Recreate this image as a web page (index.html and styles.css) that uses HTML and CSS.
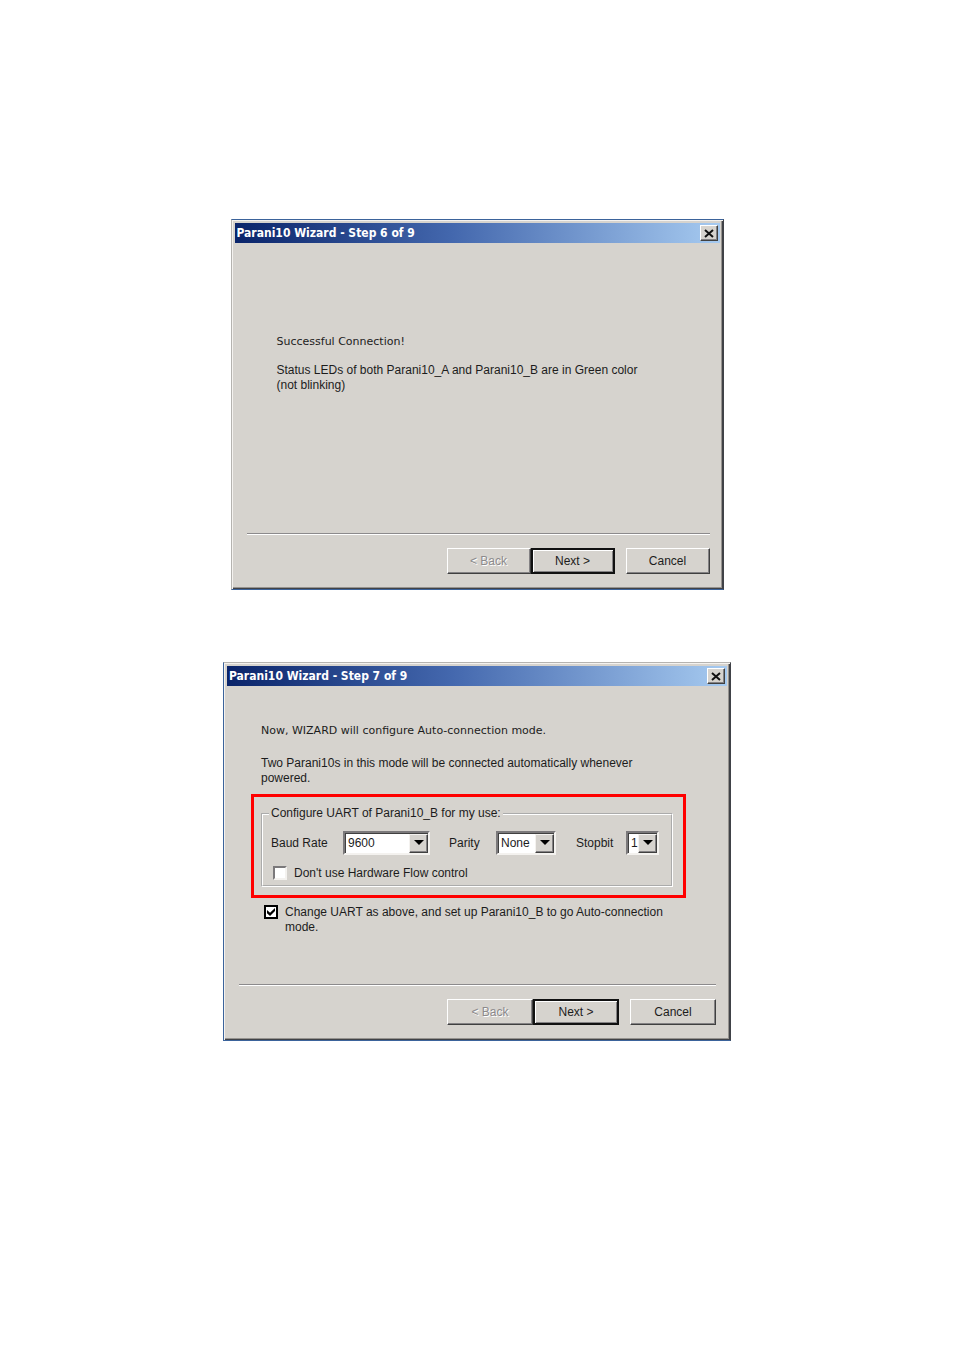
FILE: index.html
```html
<!DOCTYPE html>
<html lang="en">
<head>
    <meta charset="UTF-8">
    <meta name="viewport" content="width=device-width, initial-scale=1.0">
    <title>Parani10 Wizard</title>
    <link rel="stylesheet" href="styles.css">
</head>
<body>
    <main class="page">
        <section class="dialog dialog-small">
            <header class="titlebar">
                <h2>Parani10 Wizard - Step 6 of 9</h2>
                <button type="button" class="close" aria-label="Close">
                    <svg width="10" height="9" viewBox="0 0 10 9"><path d="M1 1l8 7M9 1L1 8" stroke="#111" stroke-width="2"/></svg>
                </button>
            </header>
            <div class="dialog-body status">
                <p class="lead">Successful Connection!</p>
                <p>Status LEDs of both Parani10_A and Parani10_B are in Green color<br>(not blinking)</p>
            </div>
            <footer class="actions">
                <button type="button" class="btn" disabled>&lt; Back</button>
                <button type="button" class="btn btn-default">Next &gt;</button>
                <button type="button" class="btn btn-cancel">Cancel</button>
            </footer>
        </section>

        <form class="dialog dialog-large">
            <header class="titlebar">
                <h2>Parani10 Wizard - Step 7 of 9</h2>
                <button type="button" class="close" aria-label="Close">
                    <svg width="10" height="9" viewBox="0 0 10 9"><path d="M1 1l8 7M9 1L1 8" stroke="#111" stroke-width="2"/></svg>
                </button>
            </header>
            <div class="dialog-body config">
                <div class="intro">
                    <p class="lead">Now, WIZARD will configure Auto-connection mode.</p>
                    <p>Two Parani10s in this mode will be connected automatically whenever<br>powered.</p>
                </div>

                <div class="highlight">
                    <fieldset>
                        <legend>Configure UART of Parani10_B for my use:</legend>
                        <div class="uart">
                            <label for="baud">Baud Rate</label>
                            <span class="combo combo-baud">
                                <select id="baud"><option>9600</option></select>
                            </span>
                            <label for="parity">Parity</label>
                            <span class="combo combo-parity">
                                <select id="parity"><option>None</option></select>
                            </span>
                            <label for="stopbit">Stopbit</label>
                            <span class="combo combo-stop">
                                <select id="stopbit"><option>1</option></select>
                            </span>
                        </div>
                        <div class="check">
                            <input type="checkbox" id="flow">
                            <label for="flow">Don't use Hardware Flow control</label>
                        </div>
                    </fieldset>
                </div>

                <div class="check check-apply">
                    <input type="checkbox" id="apply" checked>
                    <label for="apply">Change UART as above, and set up Parani10_B to go Auto-connection<br>mode.</label>
                </div>
            </div>
            <footer class="actions">
                <button type="button" class="btn" disabled>&lt; Back</button>
                <button type="button" class="btn btn-default">Next &gt;</button>
                <button type="button" class="btn btn-cancel">Cancel</button>
            </footer>
        </form>
    </main>
</body>
</html>
```
FILE: styles.css
```css
* {
    margin: 0;
    padding: 0;
    box-sizing: border-box;
}

body {
    font-family: "Liberation Sans", Arial, sans-serif;
    font-size: 12px;
    line-height: 15px;
    color: #1c1c1c;
    background: #ffffff;
}

button,
select {
    font: inherit;
    color: inherit;
}

.page {
    display: flex;
    flex-direction: column;
    align-items: center;
    gap: 72px;
    padding: 219px 0;
}

/* Dialog frame */
.dialog {
    width: 100%;
    padding: 3px;
    background: #d6d3ce;
    border: 1px solid #3b639b;
    border-right-color: #404247;
    box-shadow: inset 1px 1px #f4f2ef, inset -1px -1px #404247, inset -2px -2px #96938f;
}

.dialog-small {
    max-width: 493px;
    border-left-color: #b5b3b0;
}

.dialog-large {
    max-width: 508px;
    border-top-color: #b5b3b0;
}

.titlebar {
    display: flex;
    align-items: center;
    justify-content: space-between;
    height: 20px;
    padding: 0 2px;
    background: linear-gradient(to right, #0a246a, #4468ae 45%, #a6caf0);
}

.titlebar h2 {
    font-family: "DejaVu Sans Condensed", "DejaVu Sans", sans-serif;
    font-size: 12px;
    font-weight: bold;
    font-stretch: condensed;
    color: #ffffff;
}

.close {
    display: flex;
    align-items: center;
    justify-content: center;
    width: 18px;
    height: 16px;
    background: #d6d3ce;
    border: 1px solid;
    border-color: #ffffff #404040 #404040 #ffffff;
    box-shadow: inset -1px -1px #848284;
}

.dialog-small .dialog-body {
    min-height: 290px;
}

.dialog-large .dialog-body {
    min-height: 298px;
}

.status {
    padding: 91px 42px 0;
}

.config {
    padding: 37px 41px 0 24px;
}

.intro {
    padding-left: 10px;
}

.lead {
    font-family: "DejaVu Sans", sans-serif;
    font-size: 11px;
    margin-bottom: 14px;
}

.config .lead {
    margin-bottom: 18px;
}

/* UART settings */
.highlight {
    margin-top: 8px;
    padding: 9px 10px 8px 7px;
    border: 3px solid #ff0000;
}

fieldset {
    padding: 10px 8px 4px;
    border: 2px groove #ffffff;
}

legend {
    padding: 0 2px;
    margin-left: -2px;
}

.uart {
    display: grid;
    grid-template-columns: 72px 106px 47px 80px 50px 33px;
    align-items: center;
    margin-bottom: 11px;
}

.combo {
    position: relative;
    height: 24px;
    background: #ffffff;
    border: 2px solid;
    border-color: #7b797b #f4f2ef #f4f2ef #7b797b;
    box-shadow: inset 1px 1px #404040;
}

.combo-baud {
    width: 87px;
}

.combo-parity {
    width: 60px;
}

.combo-stop {
    width: 33px;
}

.combo select {
    appearance: none;
    display: block;
    width: 100%;
    height: 20px;
    padding: 0 0 0 3px;
    background: transparent;
    border: 0;
}

.combo::before {
    content: "";
    position: absolute;
    top: 1px;
    right: 0;
    bottom: 0;
    width: 17px;
    background: #d6d3ce;
    border: 1px solid;
    border-color: #f4f2ef #404040 #404040 #f4f2ef;
    box-shadow: inset -1px -1px #848284;
    pointer-events: none;
}

.combo::after {
    content: "";
    position: absolute;
    top: 7px;
    right: 4px;
    border: 5px solid transparent;
    border-top-color: #000000;
    border-bottom: 0;
    pointer-events: none;
}

.check {
    display: flex;
    align-items: flex-start;
    gap: 7px;
    padding-left: 2px;
}

.check input {
    appearance: none;
    flex: none;
    width: 14px;
    height: 14px;
    background: #ffffff;
    border: 2px solid;
    border-color: #7b797b #f4f2ef #f4f2ef #7b797b;
}

.check input:checked {
    border-color: #000000;
}

.check input:checked::before {
    content: "";
    display: block;
    width: 8px;
    height: 8px;
    margin: 1px;
    background: #000000;
    clip-path: polygon(0 25%, 38% 60%, 100% 0, 100% 38%, 38% 100%, 0 65%);
}

.check-apply {
    margin-top: 7px;
    padding-left: 13px;
}

/* Wizard buttons */
.actions {
    display: flex;
    justify-content: flex-end;
    margin: 0 11px 0 12px;
    padding: 14px 0 12px;
    border-top: 1px solid #8c8a8c;
    box-shadow: inset 0 1px #ffffff;
}

.dialog-small .actions {
    margin-right: 10px;
}

.btn {
    width: 84px;
    height: 26px;
    background: #d6d3ce;
    border: 1px solid;
    border-color: #ffffff #404040 #404040 #ffffff;
    box-shadow: inset -1px -1px #848284;
}

.dialog-large .btn {
    width: 86px;
}

.btn:disabled {
    color: #8c8a8c;
    text-shadow: 1px 1px #ffffff;
}

.btn-default {
    border: 2px solid #111111;
    box-shadow: inset 1px 1px #ffffff, inset -1px -1px #848284;
}

.btn-cancel {
    margin-left: 11px;
}
```
